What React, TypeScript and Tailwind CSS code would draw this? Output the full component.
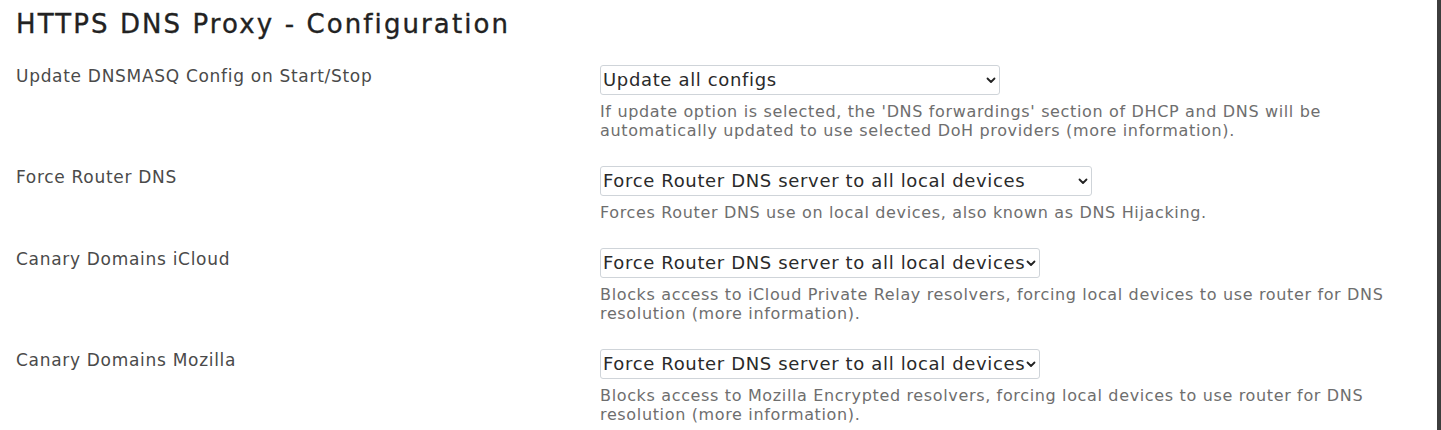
import type { ReactNode } from "react";

const font = { fontFamily: '"DejaVu Sans", "Liberation Sans", sans-serif' };

function Chevron() {
  return (
    <svg width="10" height="7" viewBox="0 0 10 7" fill="none" aria-hidden>
      <path d="M1.5 1.5 L5 5 L8.5 1.5" stroke="#222" strokeWidth="1.8" strokeLinecap="round" strokeLinejoin="round" />
    </svg>
  );
}

function FakeSelect({ value, width }: { value: string; width?: string }) {
  return (
    <div
      className={[
        "flex h-[30px] items-center rounded-[3px] border border-[#cfd4d9] bg-white pl-[2px] pr-[3px] text-[18px] tracking-[0.65px] text-[#2a2a2a]",
        width ?? "w-fit gap-[1px]",
        width ? "justify-between" : "",
      ].join(" ")}
    >
      <span className="whitespace-nowrap leading-[22px]">{value}</span>
      <Chevron />
    </div>
  );
}

function Row({ label, children, desc }: { label: string; children: ReactNode; desc: ReactNode }) {
  return (
    <div className="grid grid-cols-[584px_1fr]">
      <div className="text-[17px] leading-[22px] tracking-[0.7px] text-[#4a4a4a]">{label}</div>
      <div>
        {children}
        <p className="mt-[7px] max-w-[800px] text-[16px] leading-[19px] tracking-[0.65px] text-[#6e6e6e]">{desc}</p>
      </div>
    </div>
  );
}

export default function App() {
  return (
    <div className="flex h-[430px] w-full overflow-hidden bg-white" style={font}>
      <div className="flex-1 pl-[16px]">
        <h1 className="pt-[8px] text-[26px] font-normal leading-[32px] tracking-[2.1px] text-[#222] [-webkit-text-stroke:0.35px_#222]">
          HTTPS DNS Proxy - Configuration
        </h1>
        <div className="mt-[25px] flex flex-col gap-[26px]">
          <Row
            label="Update DNSMASQ Config on Start/Stop"
            desc="If update option is selected, the 'DNS forwardings' section of DHCP and DNS will be automatically updated to use selected DoH providers (more information)."
          >
            <FakeSelect value="Update all configs" width="w-[400px]" />
          </Row>
          <Row
            label="Force Router DNS"
            desc="Forces Router DNS use on local devices, also known as DNS Hijacking."
          >
            <FakeSelect value="Force Router DNS server to all local devices" width="w-[492px]" />
          </Row>
          <Row
            label="Canary Domains iCloud"
            desc="Blocks access to iCloud Private Relay resolvers, forcing local devices to use router for DNS resolution (more information)."
          >
            <FakeSelect value="Force Router DNS server to all local devices" />
          </Row>
          <Row
            label="Canary Domains Mozilla"
            desc="Blocks access to Mozilla Encrypted resolvers, forcing local devices to use router for DNS resolution (more information)."
          >
            <FakeSelect value="Force Router DNS server to all local devices" />
          </Row>
        </div>
      </div>
      <div className="w-[4px] shrink-0 bg-[#3d3d3d]" />
    </div>
  );
}
